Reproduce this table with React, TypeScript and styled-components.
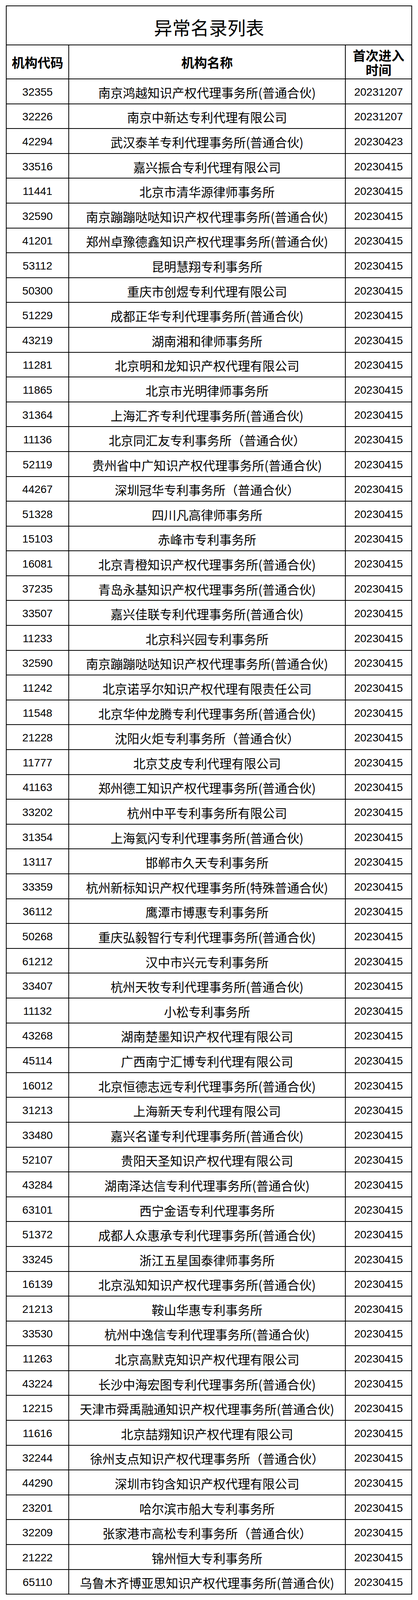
import * as React from 'react';
import styled, { createGlobalStyle } from "styled-components";

const GlobalStyle = createGlobalStyle`
  html, body {
    margin: 0;
    padding: 0;
    background: #fff;
  }
  body {
    font-family: "Liberation Sans", "Noto Sans CJK SC", sans-serif;
    color: #000;
  }
`

const Page = styled.div`
  padding: 14px 0 12px 15px;
`
const Sheet = styled.div`
  display: grid;
  grid-template-columns: 160px 708px 170px;
  grid-template-rows: 100px 87px;
  grid-auto-rows: 63.6px;
  width: 1040px;
  border-left: 2px solid #000;
  border-top: 2px solid #000;
  box-sizing: border-box;
`
const Cell = styled.div`
  display: flex;
  align-items: center;
  justify-content: center;
  box-sizing: border-box;
  border-right: 2px solid #000;
  border-bottom: 2px solid #000;
  padding-top: 4px;
  text-align: center;
  white-space: nowrap;
`
const TitleCell = styled(Cell)`
  grid-column: 1 / -1;
  padding-top: 6px;
  font-family: "Noto Sans CJK SC", sans-serif;
  font-size: 47px;
`
const HeadCell = styled(Cell)`
  padding-top: 2px;
  font-family: "Noto Sans CJK SC", sans-serif;
  font-size: 33px;
  font-weight: 700;
  line-height: 37px;
  white-space: normal;
`
const CodeCell = styled(Cell)`
  font-family: "Liberation Sans", sans-serif;
  font-size: 28px;
`
const NameCell = styled(Cell)`
  font-family: "Noto Sans CJK SC", sans-serif;
  font-size: 31.5px;
`

type Agency = [code: string, name: string, date: string];

const rows: Agency[] = [
  ["32355", "南京鸿越知识产权代理事务所(普通合伙)", "20231207"],
  ["32226", "南京中新达专利代理有限公司", "20231207"],
  ["42294", "武汉泰羊专利代理事务所(普通合伙)", "20230423"],
  ["33516", "嘉兴振合专利代理有限公司", "20230415"],
  ["11441", "北京市清华源律师事务所", "20230415"],
  ["32590", "南京蹦蹦哒哒知识产权代理事务所(普通合伙)", "20230415"],
  ["41201", "郑州卓豫德鑫知识产权代理事务所(普通合伙)", "20230415"],
  ["53112", "昆明慧翔专利事务所", "20230415"],
  ["50300", "重庆市创煜专利代理有限公司", "20230415"],
  ["51229", "成都正华专利代理事务所(普通合伙)", "20230415"],
  ["43219", "湖南湘和律师事务所", "20230415"],
  ["11281", "北京明和龙知识产权代理有限公司", "20230415"],
  ["11865", "北京市光明律师事务所", "20230415"],
  ["31364", "上海汇齐专利代理事务所(普通合伙)", "20230415"],
  ["11136", "北京同汇友专利事务所（普通合伙）", "20230415"],
  ["52119", "贵州省中广知识产权代理事务所(普通合伙)", "20230415"],
  ["44267", "深圳冠华专利事务所（普通合伙）", "20230415"],
  ["51328", "四川凡高律师事务所", "20230415"],
  ["15103", "赤峰市专利事务所", "20230415"],
  ["16081", "北京青橙知识产权代理事务所(普通合伙)", "20230415"],
  ["37235", "青岛永基知识产权代理事务所(普通合伙)", "20230415"],
  ["33507", "嘉兴佳联专利代理事务所(普通合伙)", "20230415"],
  ["11233", "北京科兴园专利事务所", "20230415"],
  ["32590", "南京蹦蹦哒哒知识产权代理事务所(普通合伙)", "20230415"],
  ["11242", "北京诺孚尔知识产权代理有限责任公司", "20230415"],
  ["11548", "北京华仲龙腾专利代理事务所(普通合伙)", "20230415"],
  ["21228", "沈阳火炬专利事务所（普通合伙）", "20230415"],
  ["11777", "北京艾皮专利代理有限公司", "20230415"],
  ["41163", "郑州德工知识产权代理事务所(普通合伙)", "20230415"],
  ["33202", "杭州中平专利事务所有限公司", "20230415"],
  ["31354", "上海氦闪专利代理事务所(普通合伙)", "20230415"],
  ["13117", "邯郸市久天专利事务所", "20230415"],
  ["33359", "杭州新标知识产权代理事务所(特殊普通合伙)", "20230415"],
  ["36112", "鹰潭市博惠专利事务所", "20230415"],
  ["50268", "重庆弘毅智行专利代理事务所(普通合伙)", "20230415"],
  ["61212", "汉中市兴元专利事务所", "20230415"],
  ["33407", "杭州天牧专利代理事务所(普通合伙)", "20230415"],
  ["11132", "小松专利事务所", "20230415"],
  ["43268", "湖南楚墨知识产权代理有限公司", "20230415"],
  ["45114", "广西南宁汇博专利代理有限公司", "20230415"],
  ["16012", "北京恒德志远专利代理事务所(普通合伙)", "20230415"],
  ["31213", "上海新天专利代理有限公司", "20230415"],
  ["33480", "嘉兴名谨专利代理事务所(普通合伙)", "20230415"],
  ["52107", "贵阳天圣知识产权代理有限公司", "20230415"],
  ["43284", "湖南泽达信专利代理事务所(普通合伙)", "20230415"],
  ["63101", "西宁金语专利代理事务所", "20230415"],
  ["51372", "成都人众惠承专利代理事务所(普通合伙)", "20230415"],
  ["33245", "浙江五星国泰律师事务所", "20230415"],
  ["16139", "北京泓知知识产权代理事务所(普通合伙)", "20230415"],
  ["21213", "鞍山华惠专利事务所", "20230415"],
  ["33530", "杭州中逸信专利代理事务所(普通合伙)", "20230415"],
  ["11263", "北京高默克知识产权代理有限公司", "20230415"],
  ["43224", "长沙中海宏图专利代理事务所(普通合伙)", "20230415"],
  ["12215", "天津市舜禹融通知识产权代理事务所(普通合伙)", "20230415"],
  ["11616", "北京喆翙知识产权代理有限公司", "20230415"],
  ["32244", "徐州支点知识产权代理事务所（普通合伙）", "20230415"],
  ["44290", "深圳市钧含知识产权代理有限公司", "20230415"],
  ["23201", "哈尔滨市船大专利事务所", "20230415"],
  ["32209", "张家港市高松专利事务所（普通合伙）", "20230415"],
  ["21222", "锦州恒大专利事务所", "20230415"],
  ["65110", "乌鲁木齐博亚思知识产权代理事务所(普通合伙)", "20230415"],
];

export default function App() {
  return (
    <Page>
      <GlobalStyle />
      <Sheet>
        <TitleCell>异常名录列表</TitleCell>
        <HeadCell>机构代码</HeadCell>
        <HeadCell>机构名称</HeadCell>
        <HeadCell>首次进入<br />时间</HeadCell>
        {rows.map(([code, name, date], i) => (
          <React.Fragment key={i}>
            <CodeCell>{code}</CodeCell>
            <NameCell>{name}</NameCell>
            <CodeCell>{date}</CodeCell>
          </React.Fragment>
        ))}
      </Sheet>
    </Page>
  );
}
